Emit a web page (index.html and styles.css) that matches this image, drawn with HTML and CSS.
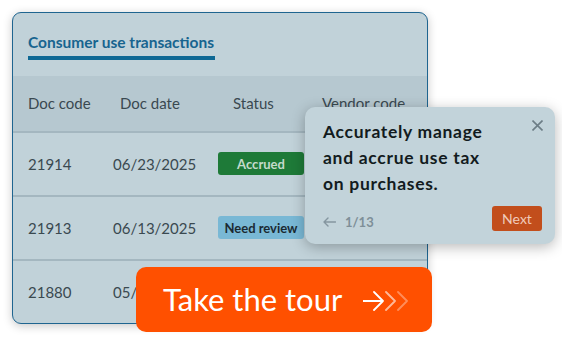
FILE: index.html
```html
<!DOCTYPE html>
<html lang="en">
<head>
<meta charset="utf-8">
<title>Consumer use transactions tour</title>
<link rel="stylesheet" href="styles.css">
</head>
<body>
<div class="stage">
  <div class="card">
    <div class="tabs">
      <div class="tab">Consumer use transactions</div>
    </div>
    <div class="table">
      <div class="row head">
        <div class="cell">Doc code</div>
        <div class="cell c-date">Doc date</div>
        <div class="cell c-status">Status</div>
        <div class="cell">Vendor code</div>
      </div>
      <div class="row">
        <div class="cell">21914</div>
        <div class="cell">06/23/2025</div>
        <div class="cell"><span class="badge accrued">Accrued</span></div>
        <div class="cell">V-1043</div>
      </div>
      <div class="row">
        <div class="cell">21913</div>
        <div class="cell">06/13/2025</div>
        <div class="cell"><span class="badge review">Need review</span></div>
        <div class="cell">V-0981</div>
      </div>
      <div class="row">
        <div class="cell">21880</div>
        <div class="cell">05/19/2025</div>
        <div class="cell"><span class="badge accrued">Accrued</span></div>
        <div class="cell">V-0877</div>
      </div>
    </div>
  </div>

  <div class="popover">
    <button class="close" aria-label="Close">
      <svg width="11" height="11" viewBox="0 0 11 11"><path d="M0.5 0.5L10.5 10.5M10.5 0.5L0.5 10.5" stroke="#6c7d86" stroke-width="1.6" fill="none"/></svg>
    </button>
    <p class="pop-text">Accurately manage<br>and accrue use tax<br>on purchases.</p>
    <div class="pop-foot">
      <div class="pager">
        <svg width="13" height="10" viewBox="0 0 13 10"><path d="M12.5 5H1M5 1L1 5L5 9" stroke="#8596a0" stroke-width="1.4" fill="none" stroke-linecap="round" stroke-linejoin="round"/></svg>
        <span>1/13</span>
      </div>
      <button class="next">Next</button>
    </div>
  </div>

  <button class="tour">
    <span>Take the tour</span>
    <svg width="46" height="20" viewBox="0 0 46 20">
      <path d="M0 10H20M11 1L20 10L11 19" stroke="#ffffff" stroke-width="1.8" fill="none" stroke-linecap="round" stroke-linejoin="round"/>
      <path d="M23 1L32 10L23 19" stroke="#ffffff" stroke-opacity="0.6" stroke-width="1.8" fill="none" stroke-linecap="round" stroke-linejoin="round"/>
      <path d="M35 1L44 10L35 19" stroke="#ffffff" stroke-opacity="0.35" stroke-width="1.8" fill="none" stroke-linecap="round" stroke-linejoin="round"/>
    </svg>
  </button>
</div>
</body>
</html>
```

FILE: styles.css
```css
* { box-sizing: border-box; }

html, body {
  margin: 0;
  padding: 0;
  background: #ffffff;
}

.stage {
  position: relative;
  width: 562px;
  height: 337px;
  padding: 12px 0 0 12px;
  overflow: hidden;
  font-family: Lato, "Noto Sans", sans-serif;
}

.card {
  width: 416px;
  height: 312px;
  border: 1.5px solid #1f6590;
  border-radius: 9px;
  background: #c1d2d9;
  overflow: hidden;
  box-shadow: 0 2px 10px rgba(0, 0, 0, 0.22);
}

.tabs {
  height: 62.5px;
  padding: 0 15px;
  display: flex;
  align-items: flex-end;
}

.tab {
  font-size: 15.5px;
  font-weight: 700;
  line-height: 18px;
  color: #17648f;
  padding-bottom: 5px;
  border-bottom: 4px solid #0e6894;
  margin-bottom: 16px;
  width: 187px;
  white-space: nowrap;
}

.row {
  display: grid;
  grid-template-columns: 85px 105px 104px 1fr;
  align-items: center;
  padding-left: 15px;
  height: 64px;
  border-top: 2px solid #a4b7c0;
  font-size: 15px;
  color: #3a4950;
}

.row.head {
  height: 55px;
  border-top: none;
  background: #b6c8d0;
}

.cell { white-space: nowrap; }

.c-date { padding-left: 7px; }
.c-status { padding-left: 15px; }

.badge {
  display: inline-flex;
  align-items: center;
  justify-content: center;
  width: 86px;
  height: 23px;
  border-radius: 3px;
  font-size: 13px;
  font-weight: 700;
}

.accrued {
  background: #1e7a38;
  color: #c4dacb;
}

.review {
  background: #79b8d5;
  color: #1b2a33;
}

.popover {
  position: absolute;
  left: 305px;
  top: 107px;
  width: 250px;
  height: 137px;
  background: #c2d3da;
  border-radius: 10px;
  box-shadow: 0 3px 14px rgba(0, 0, 0, 0.28);
  padding: 12px 13px 13px 18px;
  display: flex;
  flex-direction: column;
}

.close {
  position: absolute;
  right: 12px;
  top: 13px;
  width: 11px;
  height: 11px;
  padding: 0;
  border: none;
  background: none;
  display: flex;
}

.pop-text {
  margin: 0;
  font-size: 17.5px;
  font-weight: 700;
  letter-spacing: 0.7px;
  line-height: 26px;
  color: #121b20;
}

.pop-foot {
  margin-top: auto;
  display: flex;
  align-items: center;
  justify-content: space-between;
}

.pager {
  display: flex;
  align-items: center;
  gap: 9px;
  font-size: 13px;
  font-weight: 700;
  color: #7e8f98;
  padding-top: 6px;
}

.next {
  width: 50px;
  height: 25px;
  border: none;
  border-radius: 3px;
  background: #c24e1c;
  color: #f0cbbb;
  font-family: Lato, "Noto Sans", sans-serif;
  font-size: 14px;
  padding: 0;
}

.tour {
  position: absolute;
  left: 136px;
  top: 267px;
  width: 296px;
  height: 65px;
  border: none;
  border-radius: 10px;
  background: #ff5000;
  color: #ffffff;
  font-family: Lato, "Noto Sans", sans-serif;
  font-size: 31px;
  font-weight: 400;
  display: flex;
  align-items: center;
  padding: 0 0 2px 27px;
  gap: 21px;
}

.tour svg { margin-top: 4px; }
```
